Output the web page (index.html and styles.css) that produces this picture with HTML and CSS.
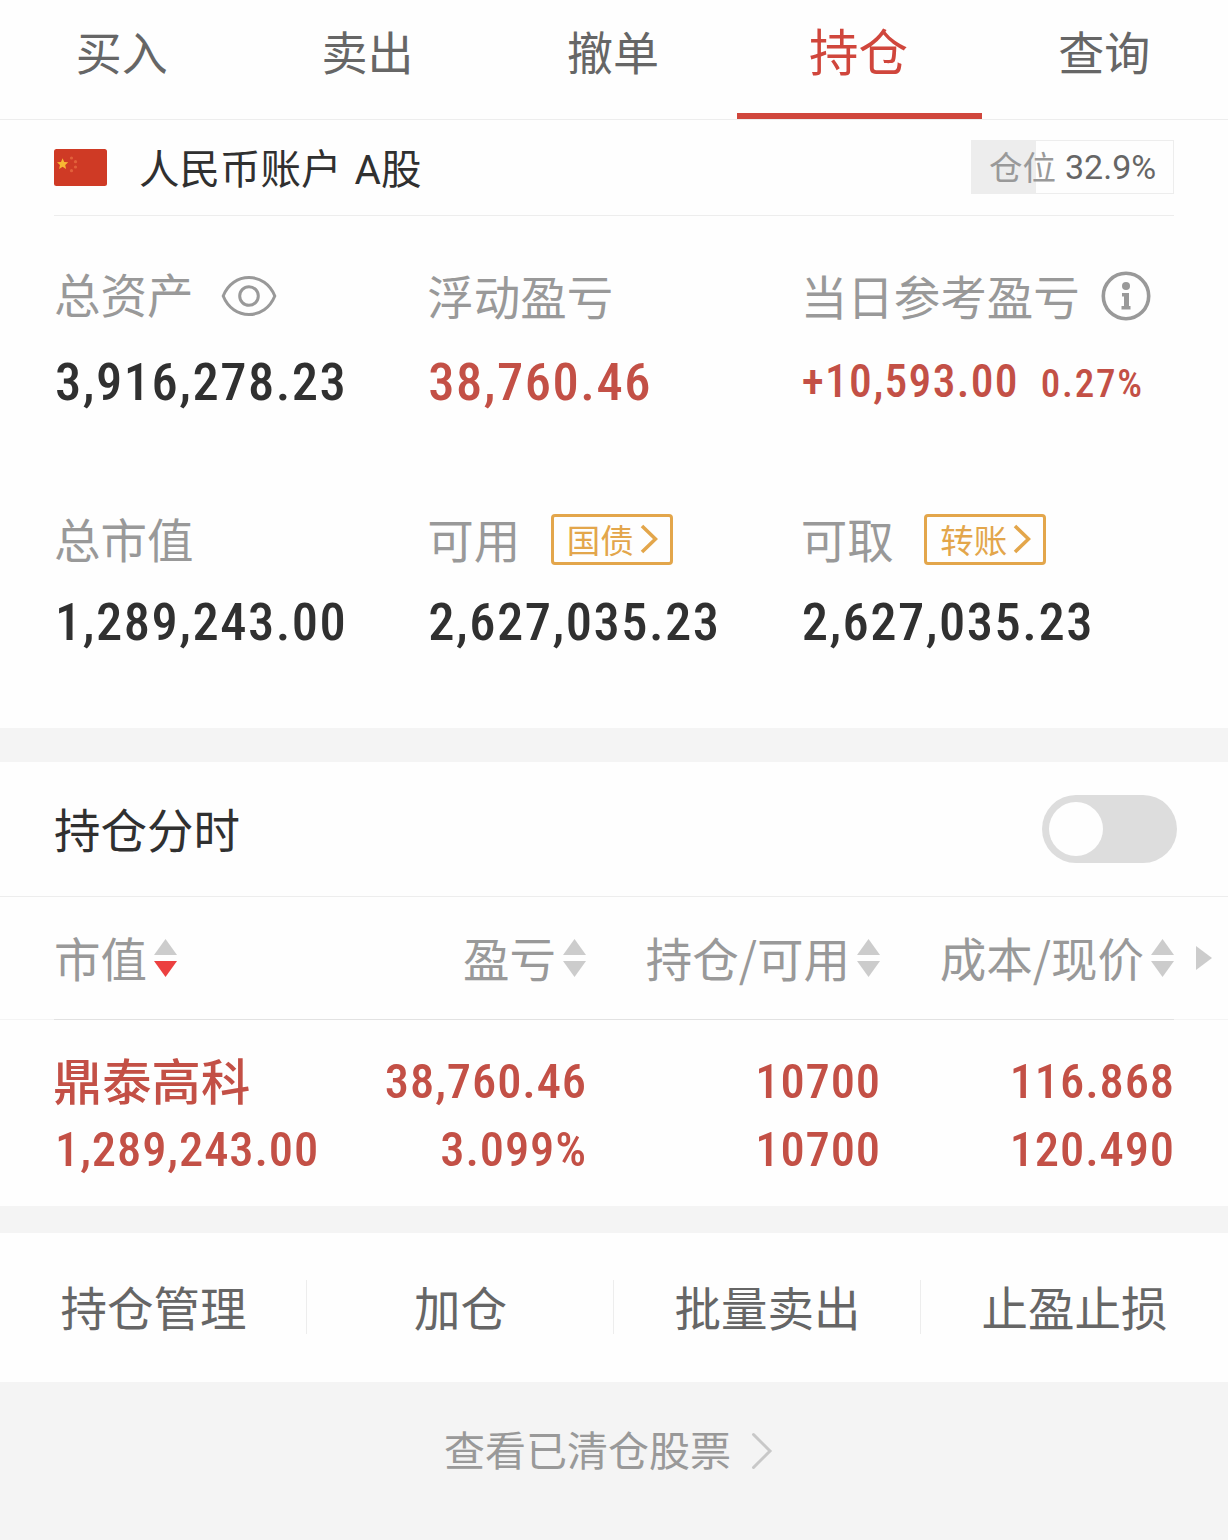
FILE: index.html
```html
<!DOCTYPE html>
<html lang="zh-CN">
<head>
  <meta charset="UTF-8">
  <title>持仓</title>
  <link rel="stylesheet" href="styles.css">
</head>
<body>
  <nav class="tabs">
    <a class="tab">买入</a>
    <a class="tab">卖出</a>
    <a class="tab">撤单</a>
    <a class="tab active">持仓</a>
    <a class="tab">查询</a>
  </nav>

  <div class="account">
    <svg class="flag" width="53" height="37" viewBox="0 0 53 37">
      <rect width="53" height="37" rx="2.5" fill="#cf3a25"/>
      <path d="M8.600 9.200l1.600 3.700 4 .4-3 2.600.9 4-3.500-2.100-3.500 2.100.9-4-3-2.600 4-.4z" fill="#f7b733"/>
      <g fill="#e2603a">
        <circle cx="17.5" cy="9" r="1.6"/>
        <circle cx="21.5" cy="12.700" r="1.6"/>
        <circle cx="21.5" cy="18" r="1.6"/>
        <circle cx="17.5" cy="21.700" r="1.6"/>
      </g>
    </svg>
    <span class="account-name">人民币账户 A股</span>
    <div class="position">
      <span class="position-label">仓位</span>
      <span class="position-value">32.9%</span>
    </div>
  </div>

  <section class="assets">
    <div class="asset">
      <div class="label label-up">总资产
        <svg class="eye" width="56" height="42" viewBox="0 0 56 42" fill="none" stroke="#999" stroke-width="3">
          <path d="M2.200 21C7 9 17 2.500 28 2.500S49 9 53.800 21C49 33 39 39.500 28 39.500S7 33 2.200 21z"/>
          <circle cx="28" cy="21" r="9.300"/>
        </svg>
      </div>
      <div class="value">3,916,278.23</div>
    </div>
    <div class="asset">
      <div class="label">浮动盈亏</div>
      <div class="value red">38,760.46</div>
    </div>
    <div class="asset">
      <div class="label">当日参考盈亏
        <svg class="info" width="50" height="50" viewBox="0 0 50 50">
          <circle cx="25" cy="25" r="22.700" fill="none" stroke="#999" stroke-width="3.600"/>
          <circle cx="25" cy="15" r="4" fill="#999"/>
          <path d="M21 22h7v13h1.500v3.500h-9V35H23v-9.500h-2z" fill="#999"/>
        </svg>
      </div>
      <div class="value red day">+10,593.00<span class="percent">0.27%</span></div>
    </div>
    <div class="asset">
      <div class="label">总市值</div>
      <div class="value">1,289,243.00</div>
    </div>
    <div class="asset">
      <div class="label">可用
        <span class="badge">国债<svg width="18" height="30" viewBox="0 0 18 30" fill="none" stroke="#e3a64b" stroke-width="3.600"><path d="M2 2l13.500 13L2 28"/></svg></span>
      </div>
      <div class="value">2,627,035.23</div>
    </div>
    <div class="asset">
      <div class="label">可取
        <span class="badge">转账<svg width="18" height="30" viewBox="0 0 18 30" fill="none" stroke="#e3a64b" stroke-width="3.600"><path d="M2 2l13.500 13L2 28"/></svg></span>
      </div>
      <div class="value">2,627,035.23</div>
    </div>
  </section>

  <div class="switch-row">
    <span class="switch-name">持仓分时</span>
    <div class="switch"><div class="knob"></div></div>
  </div>

  <section class="table">
    <div class="row head">
      <div class="cell first">市值<svg class="sort" width="23" height="38" viewBox="0 0 23 38"><path d="M11.500 0L23 16H0z" fill="#ccc"/><path d="M0 22h23L11.500 38z" fill="#ec4040"/></svg></div>
      <div class="cell">盈亏<svg class="sort" width="23" height="38" viewBox="0 0 23 38" fill="#ccc"><path d="M11.500 0L23 16H0z"/><path d="M0 22h23L11.500 38z"/></svg></div>
      <div class="cell">持仓/可用<svg class="sort" width="23" height="38" viewBox="0 0 23 38" fill="#ccc"><path d="M11.500 0L23 16H0z"/><path d="M0 22h23L11.500 38z"/></svg></div>
      <div class="cell">成本/现价<svg class="sort" width="23" height="38" viewBox="0 0 23 38" fill="#ccc"><path d="M11.500 0L23 16H0z"/><path d="M0 22h23L11.500 38z"/></svg></div>
      <svg class="more" width="16" height="24" viewBox="0 0 16 24"><path d="M0 0l16 12L0 24z" fill="#ccc"/></svg>
    </div>
    <div class="divider"></div>
    <div class="row stock">
      <div class="cell first stock-name">鼎泰高科</div>
      <div class="cell">38,760.46</div>
      <div class="cell">10700</div>
      <div class="cell">116.868</div>
      <div class="cell first stock-value">1,289,243.00</div>
      <div class="cell">3.099%</div>
      <div class="cell">10700</div>
      <div class="cell">120.490</div>
    </div>
  </section>

  <div class="actions">
    <a class="action">持仓管理</a>
    <a class="action">加仓</a>
    <a class="action">批量卖出</a>
    <a class="action">止盈止损</a>
  </div>

  <div class="cleared">
    <span>查看已清仓股票</span>
    <svg width="22" height="38" viewBox="0 0 22 38" fill="none" stroke="#c8c8c8" stroke-width="3" stroke-linecap="round"><path d="M2.500 2.500L19 19 2.500 35.500"/></svg>
  </div>
</body>
</html>
```

FILE: styles.css
```css
* {
  box-sizing: border-box;
}

body {
  margin: 0;
  width: 1228px;
  height: 1540px;
  overflow: hidden;
  background-color: #f4f4f4;
  font-family: 'Noto Sans CJK SC', sans-serif;
  font-size: 46.5px;
  color: #303030;
  white-space: nowrap;
}

svg {
  flex: none;
}

/* top tabs */
.tabs {
  display: flex;
  height: 120px;
  background-color: #fefefe;
  border-bottom: 1px solid #ededed;
}

.tab {
  flex: 1;
  height: 119px;
  padding-right: 2px;
  line-height: 100px;
  text-align: center;
  font-size: 46px;
  color: #666;
}

.tab.active {
  font-size: 49.5px;
  color: #d0463c;
  border-bottom: 6px solid #d0463c;
}

/* account */
.account {
  display: flex;
  align-items: center;
  height: 96px;
  padding: 0 54px 2px;
  background: linear-gradient(#ededed, #ededed) 54px 95px / 1120px 1px no-repeat #fefefe;
}

.account-name {
  margin-top: 5px;
  margin-left: 32px;
  line-height: 80px;
  font-family: Roboto, 'Noto Sans CJK SC', sans-serif;
  font-size: 40.5px;
  word-spacing: 3px;
}

.position {
  display: flex;
  align-items: center;
  gap: 9px;
  width: 203px;
  height: 54px;
  margin-left: auto;
  padding-left: 17px;
  border: 1px solid #ededed;
  background: linear-gradient(90deg, #ededed 64px, #fefefe 64px);
  line-height: 48px;
  font-size: 33.5px;
}

.position-label {
  margin-top: -2px;
  color: #999;
}

.position-value {
  color: #666;
  font-family: Roboto, sans-serif;
  font-size: 34px;
}

/* assets */
.assets {
  display: grid;
  grid-template-columns: repeat(3, 1fr);
  grid-template-rows: 243px 1fr;
  height: 512px;
  padding: 49px 54px 0;
  background-color: #fefefe;
}

.label {
  display: flex;
  align-items: center;
  height: 60px;
  line-height: 58px;
  color: #999;
}

.label-up {
  margin-top: -2px;
  margin-bottom: 29px;
}

.eye {
  margin-left: 27px;
  margin-top: 5px;
}

.info {
  margin-left: 21px;
  margin-top: 2px;
}

.value {
  height: 60px;
  margin-top: 27px;
  padding-left: 1px;
  line-height: 60px;
  font-family: Roboto, sans-serif;
  font-size: 52.5px;
  font-weight: 500;
  font-stretch: 85%;
  letter-spacing: 1.5px;
}

.asset:nth-child(n+4) .value {
  margin-top: 24px;
}

.red {
  color: #c35046;
}

.value.day {
  font-size: 45.5px;
  letter-spacing: 1.3px;
}

.percent {
  margin-left: 22px;
  font-size: 39px;
  letter-spacing: 1.8px;
}

.badge {
  display: flex;
  align-items: center;
  width: 122px;
  height: 51px;
  margin-top: 2px;
  margin-left: 30.5px;
  padding-left: 13px;
  gap: 6px;
  border: 3px solid #e3a64b;
  border-radius: 4px;
  color: #e3a64b;
  line-height: 44px;
  font-size: 33.5px;
}

/* time-share switch */
.switch-row {
  display: flex;
  align-items: center;
  justify-content: space-between;
  height: 135px;
  margin-top: 34px;
  padding: 0 51px 0 54px;
  background-color: #fefefe;
  border-bottom: 1px solid #ededed;
}

.switch-name {
  margin-top: -4px;
}

.switch {
  width: 135px;
  height: 68px;
  padding: 7px;
  border-radius: 34px;
  background-color: #ddd;
}

.knob {
  width: 54px;
  height: 54px;
  border-radius: 50%;
  background-color: #fefefe;
}

/* holdings */
.table {
  height: 309px;
  background-color: #fefefe;
}

.row {
  display: grid;
  grid-template-columns: 268px 264px 294px 294px;
  padding-left: 54px;
}

.head {
  grid-template-columns: 268px 264px 294px 294px 1fr;
  align-items: center;
  height: 122px;
  padding-bottom: 4px;
  color: #999;
}

.cell {
  display: flex;
  align-items: center;
  justify-content: flex-end;
}

.cell.first {
  justify-content: flex-start;
}

.sort {
  margin-left: 7px;
  margin-top: 4px;
}

.more {
  margin-left: 22px;
  margin-top: 4px;
}

.divider {
  height: 1px;
  background: linear-gradient(#e2e2e2, #e2e2e2) 54px 0 / 1120px 1px no-repeat #f4f4f4;
}

.stock {
  grid-template-rows: 68px 68px;
  padding-top: 27px;
  font-family: Roboto, sans-serif;
  font-size: 48.5px;
  font-weight: 500;
  font-stretch: 85%;
  letter-spacing: 0.9px;
  color: #c35046;
}

.stock .cell {
  margin-right: -1px;
}

.stock-name {
  margin-top: -6px;
  margin-left: -1px;
  font-family: 'Noto Sans CJK SC', sans-serif;
  font-size: 49.3px;
  letter-spacing: 0;
}

.stock-value {
  padding-left: 1px;
}

/* bottom actions */
.actions {
  display: flex;
  align-items: center;
  height: 149px;
  margin-top: 27px;
  padding-bottom: 1px;
  background-color: #fefefe;
}

.action {
  flex: 1;
  height: 54px;
  line-height: 51px;
  text-align: center;
  color: #666;
  background: linear-gradient(#ededed, #ededed) right / 1px 100% no-repeat;
}

.action:last-child {
  background: none;
}

.cleared {
  display: flex;
  align-items: center;
  justify-content: center;
  gap: 20px;
  height: 134px;
  padding-right: 11px;
  font-size: 41px;
  line-height: 60px;
  color: #999;
}

.cleared span {
  margin-top: -2px;
}

.cleared svg {
  margin-top: 4px;
}
```
